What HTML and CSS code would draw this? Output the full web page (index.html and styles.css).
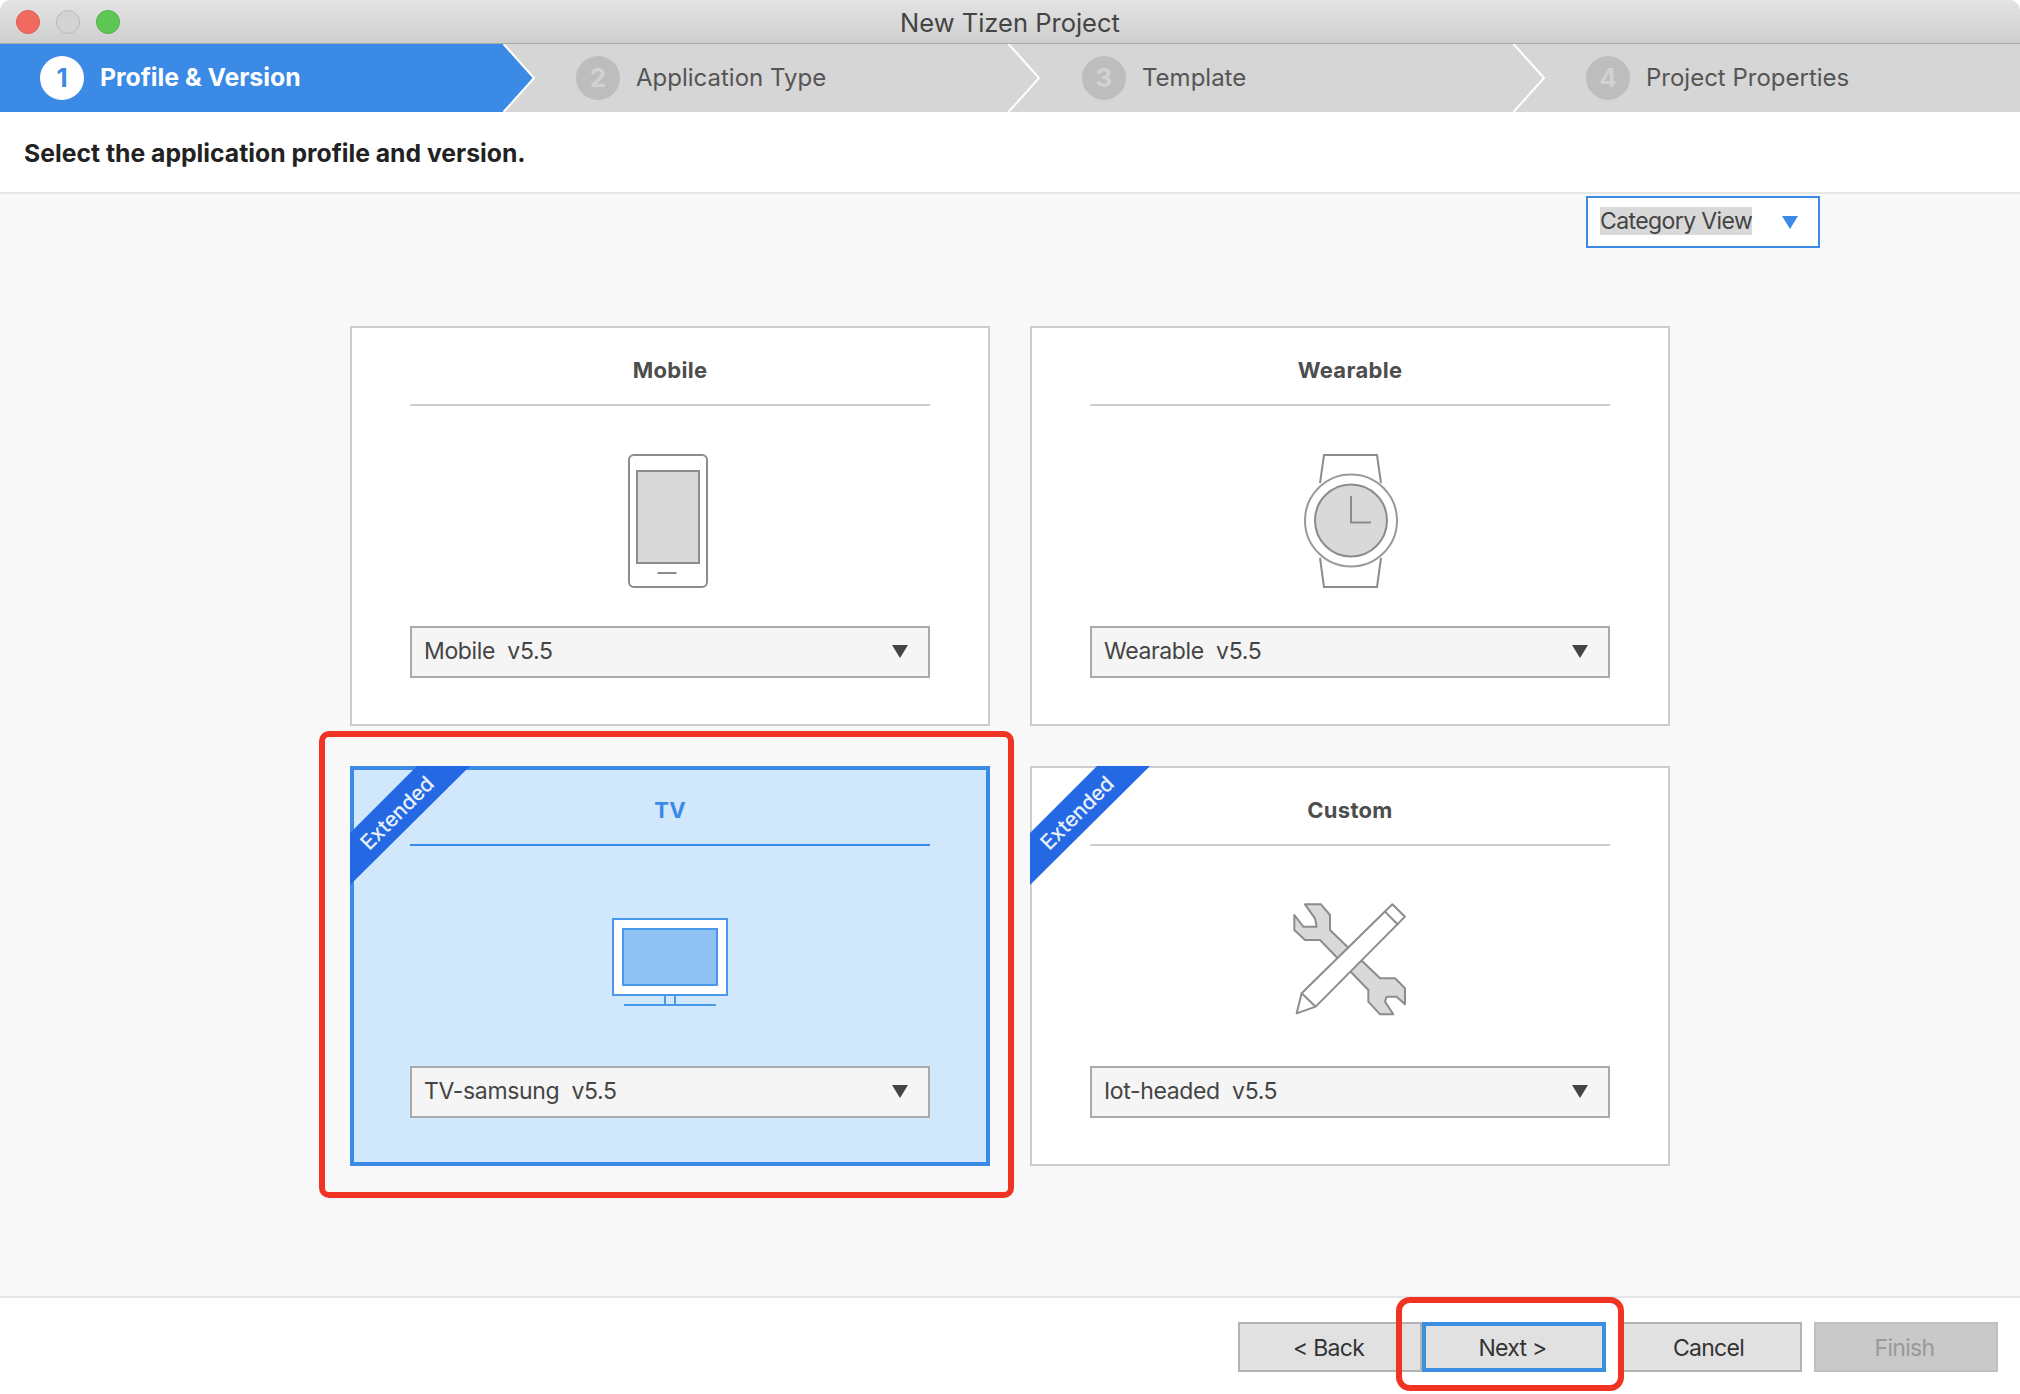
FILE: index.html
```html
<!doctype html>
<html>
<head>
<meta charset="utf-8">
<title>New Tizen Project</title>
<link rel="stylesheet" href="styles.css">
</head>
<body>
<div id="window">
	<div class="titlebar">
		<div class="lights">
			<span class="light red"></span>
			<span class="light grey"></span>
			<span class="light green"></span>
		</div>
		<div class="title">New Tizen Project</div>
	</div>
	<ul class="steps">
		<li class="step active">
			<span class="num">1</span><span class="label">Profile &amp; Version</span>
			<svg class="chev" viewBox="0 0 34 68"><path d="M1.5 0L32 34L1.5 68H0V0Z" fill="#3b8ae6"/><path d="M1.5 0L32 34L1.5 68" fill="none" stroke="#fff" stroke-width="2"/></svg>
		</li>
		<li class="step">
			<span class="num">2</span><span class="label">Application Type</span>
			<svg class="chev" viewBox="0 0 34 68"><path d="M1.5 0L32 34L1.5 68" fill="none" stroke="#fff" stroke-width="2"/></svg>
		</li>
		<li class="step step-third">
			<span class="num">3</span><span class="label">Template</span>
			<svg class="chev" viewBox="0 0 34 68"><path d="M1.5 0L32 34L1.5 68" fill="none" stroke="#fff" stroke-width="2"/></svg>
		</li>
		<li class="step">
			<span class="num">4</span><span class="label">Project Properties</span>
		</li>
	</ul>
	<div class="subtitle">Select the application profile and version.</div>
	<div class="main">
		<div class="viewbar">
			<div class="viewselect">
				<span class="viewtext">Category View</span>
				<span class="arrow arrow-blue"></span>
			</div>
		</div>
		<div class="cards">
			<div class="card">
				<div class="card-title">Mobile</div>
				<svg class="icon" viewBox="0 0 240 134">
					<rect x="79" y="1" width="78" height="132" rx="5" fill="#fff" stroke="#8c8c8c" stroke-width="2"/>
					<rect x="87" y="17" width="62" height="92" fill="#d9d9d9" stroke="#8c8c8c" stroke-width="2"/>
					<path d="M107.5 119H126.5" stroke="#8c8c8c" stroke-width="2"/>
				</svg>
				<div class="select"><span>Mobile  v5.5</span><span class="arrow"></span></div>
			</div>
			<div class="card">
				<div class="card-title">Wearable</div>
				<svg class="icon" viewBox="0 0 240 134">
					<path d="M90 29L94 1H147L151 29M90 104L94 133H147L151 104" fill="#fff" stroke="#8c8c8c" stroke-width="2"/>
					<circle cx="121" cy="66.5" r="46" fill="#fff" stroke="#9a9a9a" stroke-width="2"/>
					<circle cx="121" cy="66.5" r="36" fill="#d9d9d9" stroke="#8c8c8c" stroke-width="2"/>
					<path d="M121 42V68.5H141" fill="none" stroke="#8c8c8c" stroke-width="2"/>
				</svg>
				<div class="select"><span>Wearable  v5.5</span><span class="arrow"></span></div>
			</div>
			<div class="card card-selected">
				<div class="ribbon"><span>Extended</span></div>
				<div class="card-title">TV</div>
				<svg class="icon" viewBox="0 0 240 134">
					<rect x="63" y="25" width="114" height="76" fill="#fff" stroke="#4a98ec" stroke-width="2"/>
					<rect x="73" y="35" width="94" height="56" fill="#8fc2f2" stroke="#4a98ec" stroke-width="2"/>
					<path d="M115 102V110M125 102V110M74 111H166" fill="none" stroke="#4a98ec" stroke-width="2"/>
				</svg>
				<div class="select"><span>TV-samsung  v5.5</span><span class="arrow"></span></div>
			</div>
			<div class="card">
				<div class="ribbon"><span>Extended</span></div>
				<div class="card-title">Custom</div>
				<svg class="icon" viewBox="0 0 240 134">
					<g transform="translate(55 1) scale(.3333)" stroke="#8c8c8c" stroke-width="6" stroke-linejoin="round">
						<path d="M60 28H108L135 60V105L285 250H330L360 280V328L335 305H305L300 320L325 358H285L250 320V285L105 135H60L28 105V60L55 95H95L90 70Z" fill="#d9d9d9"/>
						<path d="M35 355L50 295L322 28L360 65L92 335Z" fill="#fff"/>
						<path d="M50 295L92 335M300 50L340 90" fill="none"/>
					</g>
				</svg>
				<div class="select"><span>Iot-headed  v5.5</span><span class="arrow"></span></div>
			</div>
		</div>
	</div>
	<div class="footer">
		<button class="btn">&lt; Back</button>
		<button class="btn btn-next">Next &gt;</button>
		<button class="btn btn-cancel">Cancel</button>
		<button class="btn btn-finish">Finish</button>
	</div>
	<div class="mark mark-card"></div>
	<div class="mark mark-next"></div>
</div>
</body>
</html>
```

FILE: styles.css
```css
body {
	margin: 0;
	background: #fff;
	font-family: Inter, "Liberation Sans", sans-serif;
	color: #444;
}
ul {
	margin: 0;
	padding: 0;
	list-style: none;
}
#window {
	position: relative;
	height: 1394px;
	overflow: hidden;
	border-radius: 10px 10px 0 0;
}
.titlebar {
	display: flex;
	align-items: center;
	position: relative;
	height: 43px;
	background: linear-gradient(#e4e4e4, #cecece);
	border-bottom: 1px solid #a8a8a8;
}
.lights {
	display: flex;
	gap: 16px;
	padding-left: 16px;
	position: absolute;
	left: 0;
	top: 10px;
}
.light {
	width: 22px;
	height: 22px;
	border: 1px solid;
	border-radius: 50%;
}
.red { background: #f2695f; border-color: #dd5a50; }
.grey { background: #d3d3d3; border-color: #b8b8b8; }
.green { background: #5fc855; border-color: #4fb046; }
.title {
	flex: 1;
	padding-top: 2px;
	text-align: center;
	font-size: 25.5px;
	color: #444;
}
.steps {
	display: grid;
	grid-template-columns: 536px 505px 505px 1fr;
	height: 68px;
	background: #d6d6d6;
}
.step {
	display: flex;
	align-items: center;
	gap: 16px;
	position: relative;
	padding-left: 40px;
	font-size: 24px;
	color: #555;
}
.step-third {
	padding-left: 41px;
}
.label {
	margin-top: -2px;
}
.step.active {
	background: linear-gradient(#3b8ae6, #3b8ae6) 0 0 / 502px 100% no-repeat;
	color: #fff;
	font-size: 24.8px;
	font-weight: 700;
}
.num {
	width: 44px;
	height: 44px;
	border-radius: 50%;
	background: #bdbdbd;
	color: #d2d2d2;
	font-weight: 700;
	font-size: 26px;
	line-height: 44px;
	text-align: center;
}
.active .num {
	background: #fff;
	color: #3b8ae6;
}
.chev {
	position: absolute;
	right: 0;
	top: 0;
	width: 34px;
	height: 68px;
}
.subtitle {
	height: 80px;
	padding-left: 24px;
	line-height: 83px;
	font-size: 24.75px;
	font-weight: 700;
	color: #222;
	border-bottom: 2px solid #e6e6e6;
	background: #fff;
}
.main {
	height: 1102px;
	background: #f8f8f8;
}
.viewbar {
	display: flex;
	justify-content: flex-end;
	padding: 2px 200px 0 0;
}
.viewselect {
	display: flex;
	align-items: center;
	justify-content: space-between;
	box-sizing: border-box;
	width: 234px;
	height: 52px;
	padding: 0 20px 0 12px;
	border: 2px solid #3b8ae6;
	background: #fff;
	font-size: 23px;
	letter-spacing: -0.6px;
}
.viewtext {
	background: #d9d9d9;
	line-height: 28px;
	margin-top: -2px;
}
.arrow {
	width: 0;
	height: 0;
	border-left: 8px solid transparent;
	border-right: 8px solid transparent;
	border-top: 13px solid #444;
}
.arrow-blue {
	border-top-color: #3b8ae6;
}
.cards {
	display: grid;
	grid-template-columns: 640px 640px;
	gap: 40px;
	justify-content: center;
	margin-top: 78px;
}
.card {
	position: relative;
	box-sizing: border-box;
	height: 400px;
	padding: 0 58px;
	background: #fff;
	border: 2px solid #ccc;
}
.card-title {
	height: 76px;
	line-height: 84px;
	text-align: center;
	font-size: 22px;
	font-weight: 700;
	letter-spacing: 0.3px;
	color: #4d4d4d;
	border-bottom: 2px solid #ccc;
}
.icon {
	display: block;
	width: 240px;
	height: 134px;
	margin: 48px auto 38px;
}
.select {
	display: flex;
	align-items: center;
	justify-content: space-between;
	box-sizing: border-box;
	height: 52px;
	padding: 0 20px 2px 12px;
	background: #f5f5f5;
	border: 2px solid #aaa;
	font-size: 23px;
	letter-spacing: -0.35px;
	white-space: pre;
}
.card-selected {
	background: #d1e7fc;
	border-color: #3b8ae6;
	box-shadow: inset 0 0 0 2px #3b8ae6;
}
.card-selected .card-title {
	color: #3b8ae6;
	border-bottom-color: #3b8ae6;
}
.ribbon {
	position: absolute;
	left: -2px;
	top: -2px;
	width: 122px;
	height: 122px;
	background: #2468e3;
	clip-path: polygon(67px 0, 120px 0, 0 119px, 0 67px);
}
.ribbon span {
	position: absolute;
	left: 47px;
	top: 47px;
	transform: translate(-50%, -50%) rotate(-45deg);
	color: #e8f0fc;
	font-size: 21px;
	font-weight: 500;
	letter-spacing: -0.2px;
}
.footer {
	display: flex;
	box-sizing: border-box;
	height: 98px;
	padding: 24px 22px 0 0;
	justify-content: flex-end;
	border-top: 2px solid #e6e6e6;
	background: #fff;
}
.btn {
	box-sizing: border-box;
	width: 184px;
	height: 50px;
	padding: 2px 3px 0 0;
	background: #e1e1e1;
	border: 2px solid #b3b3b3;
	font: 23px Inter, "Liberation Sans", sans-serif;
	letter-spacing: -0.7px;
	color: #333;
}
.btn-next {
	border: 4px solid #3b8ee0;
}
.btn-cancel {
	margin-left: 12px;
}
.btn-finish {
	margin-left: 12px;
	background: #c9c9c9;
	border-color: #c0c0c0;
	color: #999;
}
.mark {
	position: absolute;
	box-sizing: border-box;
	border: 6px solid #f03424;
}
.mark-card {
	left: 319px;
	top: 731px;
	width: 695px;
	height: 467px;
	border-radius: 10px;
}
.mark-next {
	left: 1396px;
	top: 1297px;
	width: 228px;
	height: 94px;
	border-radius: 14px;
}
```
